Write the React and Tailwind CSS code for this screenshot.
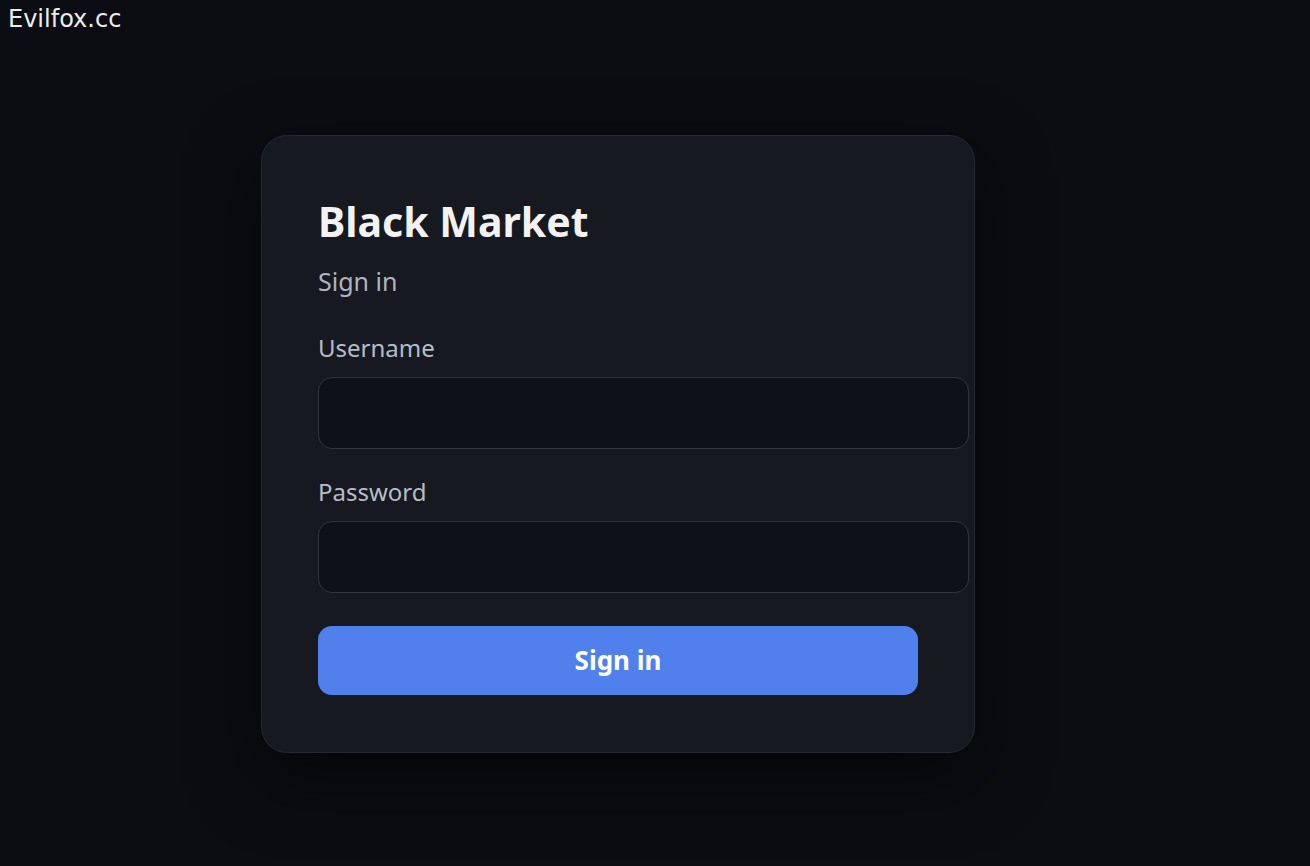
import React from 'react';

const Field = ({ label, type = 'text', className = '' }) => (
    <div className={className}>
        <label className="block text-[24px] leading-[30px] text-[#b6bcc9]">{label}</label>
        <input
            type={type}
            className="mt-[14px] block w-[651px] h-[72px] rounded-[14px] border-[1.5px] border-[#30343d] bg-[#0f1119] px-6 text-[22px] text-[#e5e7eb] outline-none"
        />
    </div>
);

export default function App() {
    return (
        <div className="min-h-screen bg-[#0b0d12] font-['Noto_Sans',sans-serif]">
            <div className="absolute left-[8px] top-[4px] text-[24px] leading-[30px] text-[#ececec] font-['DejaVu_Sans',sans-serif]">
                Evilfox.cc
            </div>
            <div className="pt-[135px] pl-[261px]">
                <div className="w-[714px] rounded-[26px] border border-[#242832] bg-[#161920] px-[56px] pt-[62px] pb-[57px] shadow-[0_24px_70px_rgba(0,0,0,0.55)]">
                    <h1 className="text-[41px] leading-[47px] font-bold text-[#f2f2f2]">Black Market</h1>
                    <p className="mt-[21px] text-[25px] leading-[30px] text-[#aeb4c1]">Sign in</p>
                    <Field label="Username" className="mt-[37px]" />
                    <Field label="Password" type="password" className="mt-[28px]" />
                    <button className="mt-[33px] block w-[600px] h-[69px] rounded-[14px] bg-[#4f80ec] text-[26px] font-bold text-white">
                        Sign in
                    </button>
                </div>
            </div>
        </div>
    );
}
